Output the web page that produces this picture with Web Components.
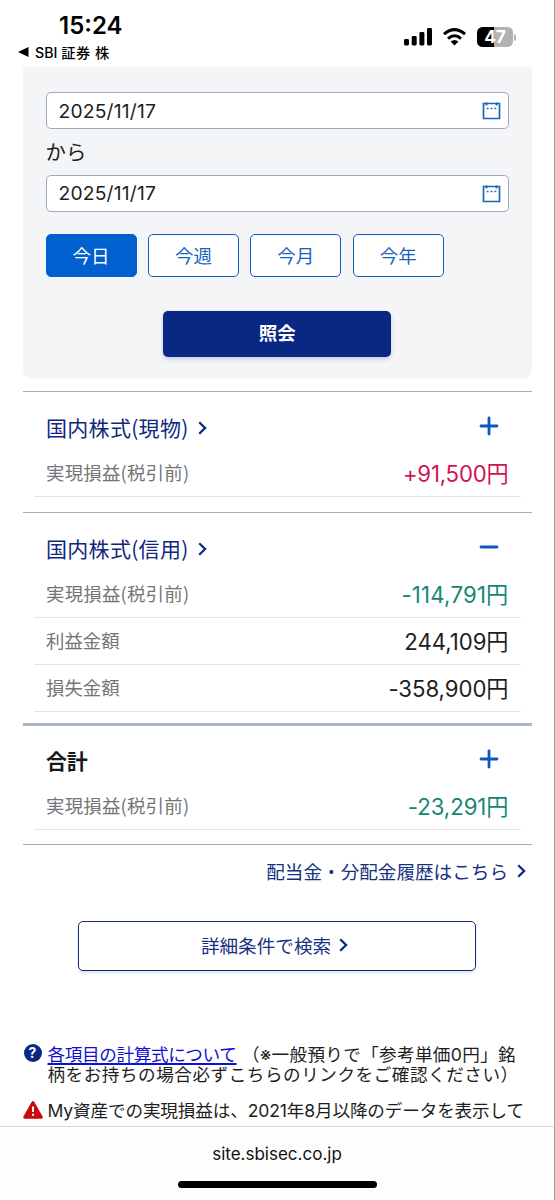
<!DOCTYPE html>
<html lang="ja">
<head>
<meta charset="utf-8">
<meta name="viewport" content="width=device-width">
<title>実現損益</title>
<style>
html,body{margin:0;height:1200px;overflow:hidden;background:#fff}
body{font-family:Inter,"Noto Sans CJK JP",sans-serif;color:#1d1e22}
</style>
</head>
<body>
<pl-app></pl-app>
<script>
const define = (name, css, html) => customElements.define(name, class extends HTMLElement {
  constructor() {
    super();
    const t = document.createElement('template');
    t.innerHTML = `<style>*{box-sizing:border-box}:host{box-sizing:border-box}${css}</style>` + (typeof html === 'function' ? html(this) : html);
    this.attachShadow({mode: 'open'}).append(t.content.cloneNode(true));
  }
});

define('status-bar', `
:host{display:flex;justify-content:space-between;height:67px;color:#000}
.left{padding:12px 0 0 18px}
.time{font-size:24px;font-weight:600;line-height:28px;padding-left:41px}
.back{display:flex;align-items:center;height:24px;font-size:14.2px;font-weight:500;white-space:pre}
.back svg{margin-right:6px}
.cjk{margin-left:4px;letter-spacing:.5px}
.right{display:flex;align-items:center;height:20px;margin:27px 38px 0 0}
`, `
<div class="left"><div class="time">15:24</div>
<div class="back"><svg width="11" height="10"><path d="M0 5L10.500 0V10Z"/></svg><span>SBI</span><span class="cjk">証券 株</span></div></div>
<div class="right">
<svg width="29" height="20" viewBox="0 0 29 20"><rect x="0" y="12" width="5" height="6.500" rx="1.400"/><rect x="7.700" y="9" width="5" height="9.500" rx="1.400"/><rect x="15.400" y="5" width="5" height="13.500" rx="1.400"/><rect x="23" y="1" width="5" height="17.500" rx="1.400"/></svg>
<svg width="25" height="20" viewBox="0 0 25 20" style="margin:0 10px 0 9px"><g fill="none" stroke="#000" stroke-width="3"><path d="M2 7.200Q12.500 -2 23 7.200"/><path d="M6 11.600Q12.500 5.800 19 11.600"/></g><path d="M12.500 18.500L8.600 14.600Q12.500 11.300 16.400 14.600Z"/></svg>
<battery-level></battery-level></div>`);

define('battery-level', `
:host{display:flex;align-items:center}
b{display:flex;align-items:center;justify-content:center;width:36px;height:20px;border-radius:5.500px;background:linear-gradient(90deg,#000 47%,#b2b2b2 47%);color:#fff;font:700 17.500px/20px Inter,sans-serif;letter-spacing:-.2px}
i{width:2px;height:7px;margin-left:1px;background:#b2b2b2;border-radius:0 2px 2px 0}
`, `<b>47</b><i></i>`);

define('date-field', `
:host{display:flex;align-items:center;justify-content:space-between;height:37px;border:1px solid #a0a8bb;border-radius:5px;background:#fff;padding:0 7px 0 12px;font-size:19.300px;letter-spacing:.18px}
svg{position:relative;top:1px}
`, `<slot></slot><svg width="19" height="19" viewBox="0 0 19 19" fill="none" stroke="#1967b8"><path d="M1.500 1.500H17.500V16.500H1.500Z" stroke-width="1.700"/><path d="M4.500 .5V3.500M14.500 .5V3.500" stroke-width="1.800"/><path d="M4.700 6.500H6.500M8.600 6.500H10.400M12.500 6.500H14.300" stroke-width="1.600"/></svg>`);

define('period-button', `
:host{display:flex;align-items:center;justify-content:center;width:91px;height:43px;border:1px solid #0f5cb6;border-radius:5px;background:#fff;color:#1763be;font-size:18.500px;padding-bottom:2px}
:host([active]){background:#0060d0;border-color:#0060d0;color:#fff}
`, `<slot></slot>`);

define('search-panel', `
:host{display:flex;flex-direction:column;height:311.500px;padding:25px 23px 0 22.500px;background:#f4f5f7;border-radius:0 0 9px 9px;margin:0 22px 0 23px}
.to{height:45.500px;display:flex;align-items:center;font-size:20.400px;padding-bottom:1px}
.periods{display:flex;gap:11.400px;margin-top:22.500px}
.go{display:flex;align-items:center;justify-content:center;align-self:center;width:228px;height:46px;margin-top:33.500px;border-radius:5px;background:#082884;color:#fff;font-size:18.500px;font-weight:700;box-shadow:0 2px 4px #08288433;padding-bottom:3px}
`, `<date-field>2025/11/17</date-field><div class="to">から</div><date-field>2025/11/17</date-field>
<div class="periods"><period-button active>今日</period-button><period-button>今週</period-button><period-button>今月</period-button><period-button>今年</period-button></div><div class="go">照会</div>`);

define('chevron-icon', `:host{display:inline-flex}`, `<svg width="9" height="14" viewBox="0 0 9 14" fill="none" stroke="#0b2a82" stroke-width="2.300"><path d="M1.200 1.200L7.100 7L1.200 12.800"/></svg>`);

define('toggle-icon', `:host{display:flex}`, el => `<svg width="20" height="20" viewBox="0 0 20 20" stroke="#0f57b8" stroke-width="2.800" stroke-linecap="round"><path d="M2 10H18${el.hasAttribute('open') ? '' : 'M10 2V18'}"/></svg>`);

define('amount-row', `
:host{display:flex;align-items:center;justify-content:space-between;height:47px;margin:0 11.500px 0 11px;padding:0 12px 2px 12px;border-bottom:1px solid #e2e4ea}
.label{font-size:18.400px;letter-spacing:.25px;color:#737478;font-family:"Noto Sans CJK JP",sans-serif}
:host([short]) .label{letter-spacing:0}
.value{font-size:22.200px;letter-spacing:-.05px}
:host([tone=up]) .value{color:#cf1551;letter-spacing:-.2px}
:host([tone=down]) .value{color:#138775}
:host([ones]) .value{letter-spacing:.2px}
`, `<span class="label"><slot name="label"></slot></span><span class="value"><slot></slot></span>`);

define('account-section', `
:host{display:block;border-top:1.500px solid #a1abba;margin:0 22px 0 23px;padding-bottom:15px}
:host([open]){padding-bottom:11.500px}
:host([total]){border-top:3px solid #aab5c5}
header{display:flex;align-items:center;justify-content:space-between;height:58px;padding:12px 33.500px 0 23px}
:host([total]) header{height:57px;padding-top:10px}
:host([total]){padding-bottom:14px}
.title{display:flex;align-items:center;gap:9.500px;font:400 21px/30px "Noto Sans CJK JP",sans-serif;letter-spacing:.3px;color:#10277e}
:host([total]) .title{font-weight:700;color:#18191d;letter-spacing:-.2px}
chevron-icon{margin-top:2px}
toggle-icon{margin-top:-1px}
`, el => `<header><span class="title"><slot name="title"></slot>${el.hasAttribute('total') ? '' : '<chevron-icon></chevron-icon>'}</span><toggle-icon ${el.hasAttribute('open') ? 'open' : ''}></toggle-icon></header><slot></slot>`);

define('page-links', `
:host{display:flex;flex-direction:column;margin:0 22px 0 23px;height:199px;border-top:1.500px solid #a1abba;color:#15317f;font-family:"Noto Sans CJK JP",sans-serif;font-size:18.600px}
.history{display:flex;align-items:center;justify-content:flex-end;gap:9px;height:51px;padding:0 6px 1px 0}
.detail{display:flex;align-items:center;justify-content:center;gap:8px;align-self:center;width:398px;height:50px;margin:25px 2px 0 0;border:1px solid #102b78;border-radius:5px;background:#fff;box-shadow:0 2px 3px #1c367e26;padding:0 4px 4px 0}
.history chevron-icon{margin-top:2px}
.detail chevron-icon{margin-top:1px}
`, `<div class="history">配当金・分配金履歴はこちら<chevron-icon></chevron-icon></div><div class="detail">詳細条件で検索<chevron-icon></chevron-icon></div>`);

define('note-line', `
:host{display:flex;margin:0 0 0 23px;font:400 17.600px/20px Inter,"Noto Sans CJK JP",sans-serif;white-space:nowrap}
.icon{width:24.500px;flex:none}
svg{display:block}
`, `<span class="icon"><slot name="icon"></slot></span><span><slot></slot></span>`);

define('help-icon', `:host{display:flex;align-items:center;justify-content:center;width:18px;height:18px;border-radius:50%;background:#082884;color:#fff;font:700 14px/18px Inter,sans-serif;margin-left:.5px}`, `?`);
define('warn-icon', `:host{display:block}svg{display:block}`, `<svg width="20" height="18" viewBox="0 0 20 18"><path d="M10 1.800L18.200 16.200H1.800Z" fill="#cb0a0f" stroke="#cb0a0f" stroke-width="3.200" stroke-linejoin="round"/><path d="M10 5.500V11M10 12.800V14.800" stroke="#fff" stroke-width="2"/></svg>`);

define('notes-list', `
:host{display:block;height:83px;padding-top:2px;overflow:hidden}
.a{color:#1010d4;text-decoration:underline;text-decoration-thickness:1.500px;text-underline-offset:2px;letter-spacing:-.36px;margin-right:5.500px}
.one{letter-spacing:.33px}
.two{letter-spacing:.53px}
.three{letter-spacing:-.14px}
help-icon{margin-top:-1px}
warn-icon{margin-top:0}
note-line+note-line{margin-top:16px}
.one,.two,.three{display:block}
`, `<note-line><help-icon slot="icon"></help-icon><span class="one"><span class="a">各項目の計算式について</span>（※一般預りで「参考単価0円」銘</span><span class="two">柄をお持ちの場合必ずこちらのリンクをご確認ください）</span></note-line>
<note-line><warn-icon slot="icon"></warn-icon><span class="three">My資産での実現損益は、2021年8月以降のデータを表示して</span></note-line>`);

define('browser-bar', `
:host{display:flex;flex-direction:column;align-items:center;height:74px;border-top:1px solid #d8d8da;background:#fdfdfd;color:#111;font-size:17px}
.url{height:54px;line-height:54px}
.home{width:199px;height:7px;border-radius:4px;background:#000}
`, `<div class="url">site.sbisec.co.jp</div><div class="home"></div>`);

define('pl-app', `
:host{display:flex;flex-direction:column;width:555px;height:1200px;overflow:hidden;background:#fff;border-right:1px solid #a3a3a5}
:host>*{flex:none}
.gap{height:12px}
`, `<status-bar></status-bar><search-panel></search-panel><div class="gap"></div>
<account-section><span slot="title">国内株式(現物)</span><amount-row tone="up"><span slot="label">実現損益(税引前)</span>+91,500円</amount-row></account-section>
<account-section open><span slot="title">国内株式(信用)</span><amount-row tone="down" ones><span slot="label">実現損益(税引前)</span>-114,791円</amount-row><amount-row short><span slot="label">利益金額</span>244,109円</amount-row><amount-row short><span slot="label">損失金額</span>-358,900円</amount-row></account-section>
<account-section total><span slot="title">合計</span><amount-row tone="down"><span slot="label">実現損益(税引前)</span>-23,291円</amount-row></account-section>
<page-links></page-links><notes-list></notes-list><browser-bar></browser-bar>`);
</script>
</body>
</html>
